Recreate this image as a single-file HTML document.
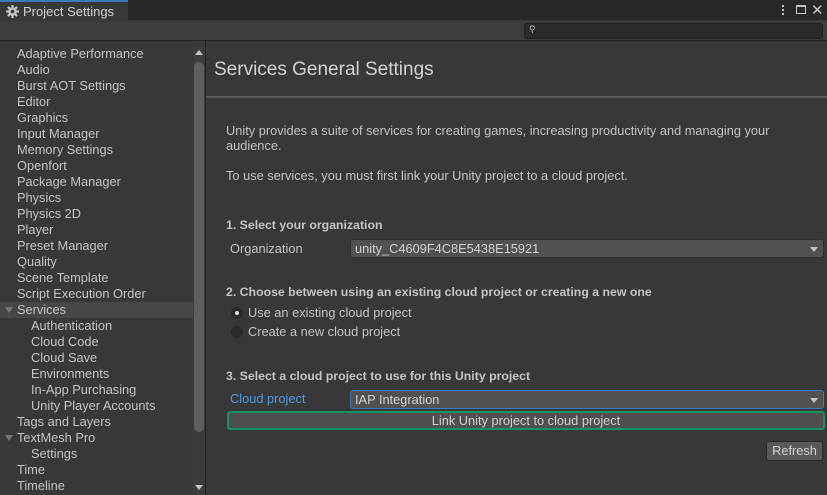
<!DOCTYPE html>
<html><head><style>
*{margin:0;padding:0;box-sizing:border-box}
body{width:827px;height:495px;background:#383838;font-family:"Liberation Sans",sans-serif;font-size:12.8px;color:#c4c4c4;position:relative;overflow:hidden}
.a{position:absolute}
.it{position:absolute;left:0;width:193px;height:16px;line-height:16px;white-space:nowrap;margin-top:1px}
.t{position:absolute;white-space:nowrap}
.b{font-weight:bold;font-size:12.3px}
.dd{position:absolute;background:#515151;border:1px solid #303030;border-radius:3px;height:19px;line-height:17px;padding-left:4px;color:#d2d2d2}
.dd:after{content:"";position:absolute;right:5px;top:7px;border-left:4px solid transparent;border-right:4px solid transparent;border-top:5px solid #c4c4c4}
</style></head><body>
<div class="a" style="left:0;top:0;width:827px;height:20px;background:#282828"></div>
<div class="a" style="left:0;top:0;width:128px;height:21px;background:#383838;border-top:2px solid #3a79bb"></div>
<svg class="a" style="left:6px;top:5px" width="13" height="13" viewBox="0 0 12 12"><g fill="#c4c4c4"><circle cx="6" cy="6" r="4"/><rect x="5" y="0" width="2" height="12"/><rect x="0" y="5" width="12" height="2"/><rect x="5" y="0" width="2" height="12" transform="rotate(45 6 6)"/><rect x="5" y="0" width="2" height="12" transform="rotate(-45 6 6)"/></g><circle cx="6" cy="6" r="1.6" fill="#383838"/></svg>
<div class="t" style="left:23px;top:4px;font-size:13px;color:#d2d2d2">Project Settings</div>
<div class="a" style="left:782px;top:5px;width:2px;height:2px;background:#c4c4c4;box-shadow:0 4px #c4c4c4,0 8px #c4c4c4"></div>
<div class="a" style="left:796px;top:5px;width:10px;height:9px;border:1px solid #c4c4c4;border-top-width:2px"></div>
<div class="t" style="left:811px;top:1px;font-size:15px;color:#c4c4c4">✕</div>
<div class="a" style="left:0;top:21px;width:827px;height:20px;background:#3c3c3c;border-bottom:1px solid #232323"></div>
<div class="a" style="left:524px;top:23px;width:299px;height:16px;background:#2a2a2a;border:1px solid #212121;border-radius:3px"></div>
<div class="t" style="left:529px;top:24px;font-size:9px;color:#bbb">⚲</div>
<div class="a" style="left:205px;top:41px;width:1px;height:454px;background:#232323"></div>
<div class="a" style="left:193px;top:46px;width:12px;height:449px;background:#3c3c3c"></div>
<div class="a" style="left:194px;top:62px;width:10px;height:370px;background:#5e5e5e;border-radius:5px"></div>
<div class="a" style="left:195px;top:50px;border-left:4px solid transparent;border-right:4px solid transparent;border-bottom:5px solid #c4c4c4"></div>
<div class="a" style="left:195px;top:485px;border-left:4px solid transparent;border-right:4px solid transparent;border-top:5px solid #c4c4c4"></div>
<div class="a" style="left:0;top:302px;width:193px;height:16px;background:#474747"></div>
<div class="it" style="top:45px;left:17px">Adaptive Performance</div>
<div class="it" style="top:61px;left:17px">Audio</div>
<div class="it" style="top:77px;left:17px">Burst AOT Settings</div>
<div class="it" style="top:93px;left:17px">Editor</div>
<div class="it" style="top:109px;left:17px">Graphics</div>
<div class="it" style="top:125px;left:17px">Input Manager</div>
<div class="it" style="top:141px;left:17px">Memory Settings</div>
<div class="it" style="top:157px;left:17px">Openfort</div>
<div class="it" style="top:173px;left:17px">Package Manager</div>
<div class="it" style="top:189px;left:17px">Physics</div>
<div class="it" style="top:205px;left:17px">Physics 2D</div>
<div class="it" style="top:221px;left:17px">Player</div>
<div class="it" style="top:237px;left:17px">Preset Manager</div>
<div class="it" style="top:253px;left:17px">Quality</div>
<div class="it" style="top:269px;left:17px">Scene Template</div>
<div class="it" style="top:285px;left:17px">Script Execution Order</div>
<div class="a" style="left:5px;top:307px;border-left:4px solid transparent;border-right:4px solid transparent;border-top:6px solid #777"></div>
<div class="it" style="top:301px;left:17px">Services</div>
<div class="it" style="top:317px;left:31px">Authentication</div>
<div class="it" style="top:333px;left:31px">Cloud Code</div>
<div class="it" style="top:349px;left:31px">Cloud Save</div>
<div class="it" style="top:365px;left:31px">Environments</div>
<div class="it" style="top:381px;left:31px">In-App Purchasing</div>
<div class="it" style="top:397px;left:31px">Unity Player Accounts</div>
<div class="it" style="top:413px;left:17px">Tags and Layers</div>
<div class="a" style="left:5px;top:435px;border-left:4px solid transparent;border-right:4px solid transparent;border-top:6px solid #777"></div>
<div class="it" style="top:429px;left:17px">TextMesh Pro</div>
<div class="it" style="top:445px;left:31px">Settings</div>
<div class="it" style="top:461px;left:17px">Time</div>
<div class="it" style="top:477px;left:17px">Timeline</div>
<div class="t" style="left:214px;top:59px;font-size:19px;color:#d2d2d2">Services General Settings</div>
<div class="a" style="left:206px;top:96px;width:621px;height:2px;background:#5a5a5a"></div>
<div class="t" style="left:226px;top:123px">Unity provides a suite of services for creating games, increasing productivity and managing your</div>
<div class="t" style="left:226px;top:138px">audience.</div>
<div class="t" style="left:226px;top:168px">To use services, you must first link your Unity project to a cloud project.</div>
<div class="t b" style="left:226px;top:218px">1. Select your organization</div>
<div class="t" style="left:230px;top:241px">Organization</div>
<div class="dd" style="left:350px;top:239px;width:474px">unity_C4609F4C8E5438E15921</div>
<div class="t b" style="left:226px;top:285px">2. Choose between using an existing cloud project or creating a new one</div>
<div class="a" style="left:231px;top:307px;width:12px;height:12px;border-radius:50%;background:#2a2a2a"></div>
<div class="a" style="left:235px;top:311px;width:4px;height:4px;border-radius:50%;background:#ddd"></div>
<div class="t" style="left:248px;top:305px">Use an existing cloud project</div>
<div class="a" style="left:231px;top:326px;width:12px;height:12px;border-radius:50%;background:#2a2a2a"></div>
<div class="t" style="left:248px;top:324px">Create a new cloud project</div>
<div class="t b" style="left:226px;top:369px">3. Select a cloud project to use for this Unity project</div>
<div class="t" style="left:230px;top:391px;color:#4d9be6">Cloud project</div>
<div class="dd" style="left:350px;top:390px;width:474px;border-color:#3a79bb">IAP Integration</div>
<div class="a" style="left:227px;top:411px;width:598px;height:19px;border:2px solid #149460;border-radius:3px;background:#4f4f4f;text-align:center;line-height:15px;color:#d2d2d2">Link Unity project to cloud project</div>
<div class="a" style="left:766px;top:441px;width:57px;height:20px;background:#585858;border:1px solid #2a2a2a;border-radius:3px;text-align:center;line-height:18px;color:#d2d2d2">Refresh</div>
</body></html>
